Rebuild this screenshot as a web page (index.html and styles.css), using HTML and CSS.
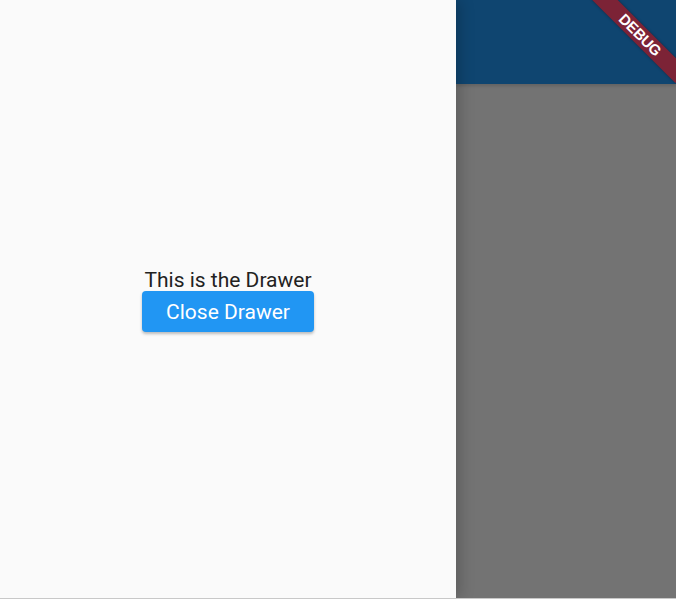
FILE: index.html
```html
<!DOCTYPE html>
<html>
<head>
<meta charset="utf-8">
<link rel="stylesheet" href="styles.css">
</head>
<body>
<div class="screen">
  <aside class="drawer">
    <div class="drawer-content">
      <p class="drawer-text">This is the Drawer</p>
      <button class="close-btn">Close Drawer</button>
    </div>
  </aside>
  <main class="scrim-side">
    <div class="appbar"></div>
    <div class="body-area"></div>
  </main>
  <div class="debug-banner">DEBUG</div>
</div>
</body>
</html>
```
FILE: styles.css
```css
html, body {
  margin: 0;
  padding: 0;
  background: #c8c8c8;
}
.screen {
  position: relative;
  width: 676px;
  height: 598px;
  display: flex;
  overflow: hidden;
  font-family: Roboto, "Noto Sans", sans-serif;
}
.drawer {
  width: 456px;
  flex: none;
  background: #fafafa;
  display: flex;
  align-items: center;
  justify-content: center;
  position: relative;
  z-index: 2;
  box-shadow: 4px 0 14px rgba(0, 0, 0, 0.2);
}
.drawer-content {
  display: flex;
  flex-direction: column;
  align-items: center;
}
.drawer-text {
  margin: 0;
  padding-top: 2px;
  font-size: 21px;
  line-height: 24px;
  color: #222222;
}
.close-btn {
  margin-top: -1px;
  width: 172px;
  height: 41px;
  border: none;
  border-radius: 4px;
  background: #2196f3;
  color: #ffffff;
  font-family: Roboto, "Noto Sans", sans-serif;
  font-size: 21px;
  padding: 0;
  box-shadow: 0 2px 3px rgba(0, 0, 0, 0.25);
}
.scrim-side {
  flex: 1;
  display: flex;
  flex-direction: column;
}
.appbar {
  height: 84px;
  background: #0f4570;
  box-shadow: 0 2px 3px rgba(0, 0, 0, 0.15);
  position: relative;
  z-index: 1;
}
.body-area {
  flex: 1;
  background: #737373;
}
.debug-banner {
  position: absolute;
  left: 581px;
  top: 26px;
  width: 118px;
  height: 18px;
  line-height: 18px;
  background: #7c2336;
  color: #ffffff;
  font-family: "Liberation Sans", Arial, sans-serif;
  font-weight: 900;
  font-size: 15px;
  letter-spacing: -0.3px;
  text-align: center;
  transform: rotate(45deg);
  box-shadow: 0 0 3px rgba(0, 0, 0, 0.35);
  z-index: 5;
}
```
